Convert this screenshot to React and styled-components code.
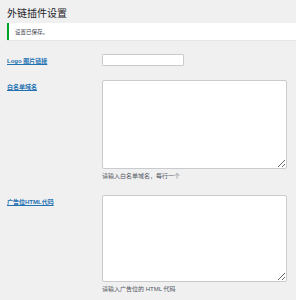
import React from "react";
import styled, { createGlobalStyle } from "styled-components";

const Global = createGlobalStyle`
  html, body { margin: 0; padding: 0; background: #f0f0f1; }
  body {
    font-family: "Liberation Sans", "Noto Sans CJK SC", sans-serif;
    color: #3c434a;
    overflow: hidden;
  }
`;

const Wrap = styled.div`
  padding: 0 0 0 7px;
  width: 296px;
  height: 300px;
  box-sizing: border-box;
`;

const Title = styled.h1`
  margin: 0;
  padding-top: 7px;
  font-size: 10px;
  line-height: 14px;
  font-weight: 400;
  color: #1d2327;
`;

const Notice = styled.div`
  margin-top: 2px;
  height: 17px;
  background: #fff;
  border-left: 2px solid #00a32a;
  box-shadow: 0 1px 1px rgba(0, 0, 0, 0.04);
  display: flex;
  align-items: center;
  padding-left: 6px;
  font-size: 5.5px;
  color: #3c434a;
`;

const Form = styled.div`
  display: flex;
  flex-direction: column;
  padding-top: 14px;
`;

const Row = styled.div`
  display: grid;
  grid-template-columns: 95px 185px;
  margin-bottom: ${(p) => p.$gap}px;
`;

const Label = styled.a`
  display: block;
  padding-top: ${(p) => p.$top}px;
  font-size: 6px;
  line-height: 8px;
  font-weight: 600;
  color: #2271b1;
  text-decoration: underline;
  align-self: start;
  justify-self: start;
`;

const Field = styled.div`
  display: flex;
  flex-direction: column;
`;

const Input = styled.input`
  box-sizing: border-box;
  width: 82px;
  height: 12px;
  margin: 0;
  padding: 0 3px;
  border: 1px solid #c9cbce;
  border-radius: 1px;
  background: #fff;
  font-size: 6px;
`;

const Area = styled.textarea`
  box-sizing: border-box;
  width: 185px;
  height: ${(p) => p.$h}px;
  margin: 0;
  padding: 2px;
  border: 1px solid #c9cbce;
  border-radius: 2px;
  background: #fff;
  font-size: 6px;
  display: block;
`;

const Hint = styled.p`
  margin: 3px 0 0;
  font-size: 6px;
  line-height: 8px;
  color: #50575e;
`;

export default function App() {
  return (
    <Wrap>
      <Global />
      <Title>外链插件设置</Title>
      <Notice>设置已保存。</Notice>
      <Form>
        <Row $gap={14}>
          <Label href="#" $top={3}>Logo 图片链接</Label>
          <Field>
            <Input type="text" />
          </Field>
        </Row>
        <Row $gap={15}>
          <Label href="#" $top={3}>白名单域名</Label>
          <Field>
            <Area $h={89} />
            <Hint>请输入白名单域名，每行一个</Hint>
          </Field>
        </Row>
        <Row $gap={0}>
          <Label href="#" $top={3}>广告位HTML代码</Label>
          <Field>
            <Area $h={87} />
            <Hint>请输入广告位的 HTML 代码</Hint>
          </Field>
        </Row>
      </Form>
    </Wrap>
  );
}
